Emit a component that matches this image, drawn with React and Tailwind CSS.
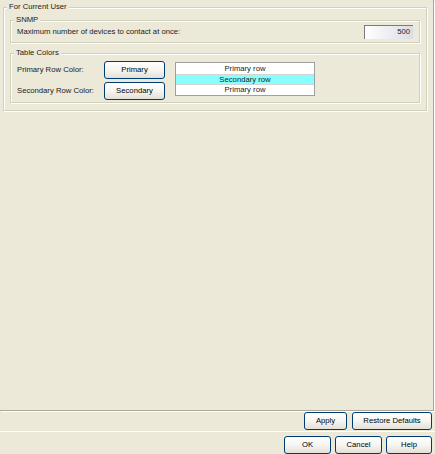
import React from "react";

function Button({ children, className = "" }) {
  return (
    <button
      className={
        "h-[18px] whitespace-nowrap rounded-[3px] border border-[#003c74] bg-gradient-to-b from-white via-[#f6f5f0] to-[#e3e0d6] px-0 text-[7.7px] leading-none text-black " +
        className
      }
    >
      {children}
    </button>
  );
}

function Group({ title, className = "", children }) {
  return (
    <div
      className={
        "relative border border-[#d0d0bf] shadow-[inset_1px_1px_0_#fff,1px_1px_0_#fff] " +
        className
      }
    >
      <span className="absolute -top-[6px] left-[3px] whitespace-nowrap bg-[#ece9d8] px-[2px] text-[7.7px] leading-[10px]">
        {title}
      </span>
      {children}
    </div>
  );
}

export default function App() {
  return (
    <div
      className="flex h-[454px] w-[435px] flex-col bg-[#ece9d8] text-[7.7px] text-[#1a1a1a]"
      style={{ fontFamily: '"Liberation Sans", Arial, sans-serif' }}
    >
      {/* Content panel */}
      <div className="h-[411px] w-[434px] border-r border-b border-[#aca899] pt-[7px] pl-[3px] shadow-[1px_1px_0_#fff]">
        <Group title="For Current User" className="h-[104px] w-[424px] px-[6px] pt-[12px]">
          <Group title="SNMP" className="flex h-[23px] w-[410px] items-center justify-between pl-[6px] pr-[6px]">
            <span className="whitespace-nowrap">Maximum number of devices to contact at once:</span>
            <div className="flex h-[14px] w-[49px] items-center justify-end border-t border-l border-[#7a7a7a] border-r-white border-b-white bg-gradient-to-r from-white to-[#dcdce6] pr-[3px] leading-none">
              500
            </div>
          </Group>
          <Group title="Table Colors" className="mt-[10px] flex h-[50px] w-[410px] pl-[6px] pt-[7px]">
            <div className="flex flex-col gap-[3px]">
              <div className="flex items-center">
                <span className="w-[87px] whitespace-nowrap">Primary Row Color:</span>
                <Button className="w-[61px]">Primary</Button>
              </div>
              <div className="flex items-center">
                <span className="w-[87px] whitespace-nowrap">Secondary Row Color:</span>
                <Button className="w-[61px]">Secondary</Button>
              </div>
            </div>
            <div className="ml-[10px] mt-[1px] flex h-[34px] w-[140px] flex-col border border-[#a0a0a0] bg-white leading-none">
              <div className="flex h-[11px] items-center justify-center">Primary row</div>
              <div className="flex h-[11px] items-center justify-center border-y border-[#d4d4d4] bg-[#88ffff]">Secondary row</div>
              <div className="flex h-[10px] items-center justify-center">Primary row</div>
            </div>
          </Group>
        </Group>
      </div>

      {/* Apply row */}
      <div className="flex h-[21px] items-start justify-end gap-[5px] border-b border-[#fff] pt-[1px] pr-[3px]">
        <Button className="w-[43px]">Apply</Button>
        <Button className="w-[80px]">Restore Defaults</Button>
      </div>

      {/* Dialog buttons */}
      <div className="flex flex-1 items-start justify-end gap-[4px] pt-[4px] pr-[3px]">
        <Button className="w-[47px]">OK</Button>
        <Button className="w-[47px]">Cancel</Button>
        <Button className="w-[46px]">Help</Button>
      </div>
    </div>
  );
}
